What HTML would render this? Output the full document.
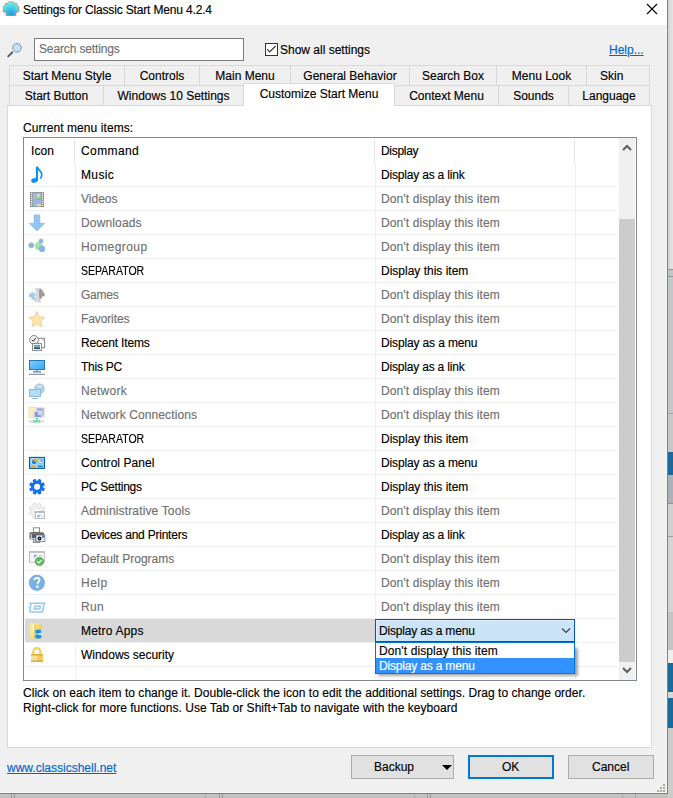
<!DOCTYPE html>
<html><head><meta charset="utf-8">
<style>
*{box-sizing:border-box}
html,body{margin:0;padding:0}
body{width:673px;height:798px;overflow:hidden;position:relative;background:#cfcfcf;font-family:"Liberation Sans",sans-serif;font-size:12px;color:#000;-webkit-text-stroke:0.15px currentColor}
.a{position:absolute}
.t{position:absolute;white-space:pre;line-height:17px;height:17px}
.g{color:#707070}
#win{position:absolute;left:0;top:0;width:668px;height:794px;background:#f0f0f0;border-right:1px solid #7474d9;border-bottom:1px solid #7474d9}
.bd{background:#d9d9d9}
.tabt{position:absolute;white-space:pre;line-height:17px;text-align:center}
.gl{position:absolute;background:#f0f0f0}
.btn{position:absolute;background:#e1e1e1;border:1px solid #adadad}
</style></head><body>
<!-- desktop strip -->
<div class="a" style="left:668px;top:0;width:5px;height:269px;background:linear-gradient(90deg,#d6d6d6,#e4e4e4)"></div>
<div class="a" style="left:668px;top:269px;width:5px;height:1px;background:#8a98a0"></div>
<div class="a" style="left:668px;top:270px;width:5px;height:6px;background:#c2c6ca"></div>
<div class="a" style="left:668px;top:276px;width:5px;height:1px;background:#8a98a0"></div>
<div class="a" style="left:668px;top:277px;width:5px;height:136px;background:#c4c6c8"></div>
<div class="a" style="left:668px;top:413px;width:5px;height:1px;background:#a0a4a8"></div>
<div class="a" style="left:668px;top:414px;width:5px;height:38px;background:#c8c8c8"></div>
<div class="a" style="left:668px;top:452px;width:5px;height:23px;background:#1c6a9a"></div>
<div class="a" style="left:668px;top:475px;width:5px;height:28px;background:#aeb2b8"></div>
<div class="a" style="left:668px;top:503px;width:5px;height:1px;background:#909498"></div>
<div class="a" style="left:668px;top:504px;width:5px;height:32px;background:#d0d0d0"></div>
<div class="a" style="left:668px;top:536px;width:5px;height:1px;background:#a0a0a0"></div>
<div class="a" style="left:668px;top:537px;width:5px;height:75px;background:#d4d4d4"></div>
<div class="a" style="left:668px;top:612px;width:5px;height:38px;background:#c4c4c4"></div>
<div class="a" style="left:668px;top:650px;width:5px;height:13px;background:#eeeeee"></div>
<div class="a" style="left:668px;top:663px;width:5px;height:29px;background:#1c6a9a"></div>
<div class="a" style="left:668px;top:692px;width:5px;height:6px;background:#d8d8d8"></div>
<div class="a" style="left:668px;top:698px;width:5px;height:30px;background:#1c6a9a"></div>
<div class="a" style="left:668px;top:728px;width:5px;height:70px;background:#cccccc"></div>
<div class="a" style="left:0;top:794px;width:668px;height:4px;background:linear-gradient(#c8c8c8,#bcbcbc)"></div>
<div class="a" style="left:11px;top:794px;width:1px;height:4px;background:#9a9a9a"></div>
<div class="a" style="left:14px;top:794px;width:1px;height:4px;background:#9a9a9a"></div>
<div class="a" style="left:205px;top:794px;width:1px;height:4px;background:#a8a8a8"></div>
<div class="a" style="left:219px;top:794px;width:1px;height:4px;background:#9a9a9a"></div>
<div class="a" style="left:222px;top:794px;width:1px;height:4px;background:#9a9a9a"></div>
<div class="a" style="left:414px;top:794px;width:1px;height:4px;background:#a8a8a8"></div>
<div class="a" style="left:427px;top:794px;width:1px;height:4px;background:#9a9a9a"></div>
<div class="a" style="left:430px;top:794px;width:1px;height:4px;background:#9a9a9a"></div>
<div class="a" style="left:622px;top:794px;width:1px;height:4px;background:#a8a8a8"></div>
<div class="a" style="left:635px;top:794px;width:1px;height:4px;background:#a8a8a8"></div>

<div id="win">
  <!-- title bar -->
  <div class="a" style="left:0;top:0;width:667px;height:25px;background:#fff"></div>
  <svg class="a" style="left:0;top:0" width="24" height="20" viewBox="0 0 24 20">
    <defs><radialGradient id="shg" gradientUnits="userSpaceOnUse" cx="11" cy="14.5" r="12"><stop offset="0" stop-color="#2a96d6"/><stop offset="0.55" stop-color="#44c8ea"/><stop offset="1" stop-color="#62f6fc"/></radialGradient>
    <g id="shl"><path d="M6.4 15.4V13L4 11Q3.6 5 11 3.6Q18.4 5 18 11L15.6 13V15.4Z"/><circle cx="9.4" cy="3.4" r="1.4"/><circle cx="12.6" cy="3.4" r="1.4"/><circle cx="6.4" cy="4.9" r="1.4"/><circle cx="15.6" cy="4.9" r="1.4"/><circle cx="4.7" cy="7.6" r="1.4"/><circle cx="17.3" cy="7.6" r="1.4"/><circle cx="4.3" cy="10.6" r="1.3"/><circle cx="17.7" cy="10.6" r="1.3"/></g></defs>
    <use href="#shl" fill="#e88848" stroke="#e88848" stroke-width="1.3"/>
    <use href="#shl" fill="url(#shg)"/>
  </svg>
  <div class="t" style="left:23px;top:2px;letter-spacing:-0.16px">Settings for Classic Start Menu 4.2.4</div>
  <svg class="a" style="left:646px;top:3px" width="12" height="12" viewBox="0 0 12 12"><path d="M1 1L11 11M11 1L1 11" stroke="#000" stroke-width="1.1"/></svg>

  <!-- search row -->
  <svg class="a" style="left:4px;top:38px" width="24" height="24" viewBox="0 0 24 24">
    <path d="M8.4 14.3L4.2 18.4" stroke="#4c5c68" stroke-width="1.9" stroke-linecap="round"/>
    <circle cx="13" cy="9.8" r="4.3" fill="#c2e0f6" stroke="#7e8c98" stroke-width="0.9"/>
  </svg>
  <div class="a" style="left:34px;top:38px;width:210px;height:23px;background:#fff;border:1px solid #7a7a7a"></div>
  <div class="t g" style="left:39px;top:41px;letter-spacing:-0.14px">Search settings</div>
  <div class="a" style="left:265px;top:43px;width:13px;height:13px;background:#fff;border:1px solid #333"></div>
  <svg class="a" style="left:265px;top:43px" width="13" height="13" viewBox="0 0 13 13"><path d="M2.2 6.2L4.7 8.9L10.6 3" stroke="#333" stroke-width="1.1" fill="none"/></svg>
  <div class="t" style="left:280px;top:42px">Show all settings</div>
  <div class="t" style="left:609px;top:42px;color:#0066cc;text-decoration:underline">Help...</div>

  <!-- tabs row 1 -->
  <div class="a" style="left:9px;top:65px;width:641px;height:21px;border:1px solid #d9d9d9"></div>
  <div class="a bd" style="left:124px;top:66px;width:1px;height:19px"></div>
  <div class="a bd" style="left:199px;top:66px;width:1px;height:19px"></div>
  <div class="a bd" style="left:290px;top:66px;width:1px;height:19px"></div>
  <div class="a bd" style="left:409px;top:66px;width:1px;height:19px"></div>
  <div class="a bd" style="left:496px;top:66px;width:1px;height:19px"></div>
  <div class="a bd" style="left:586px;top:66px;width:1px;height:19px"></div>
  <div class="tabt" style="left:9px;top:68px;width:116px">Start Menu Style</div>
  <div class="tabt" style="left:124px;top:68px;width:76px">Controls</div>
  <div class="tabt" style="left:199px;top:68px;width:92px">Main Menu</div>
  <div class="tabt" style="left:290px;top:68px;width:120px">General Behavior</div>
  <div class="tabt" style="left:409px;top:68px;width:88px">Search Box</div>
  <div class="tabt" style="left:496px;top:68px;width:91px">Menu Look</div>
  <div class="t" style="left:600px;top:68px">Skin</div>
  <!-- tabs row 2 -->
  <div class="a bd" style="left:9px;top:86px;width:1px;height:19px"></div>
  <div class="a bd" style="left:649px;top:86px;width:1px;height:19px"></div>
  <div class="a bd" style="left:103px;top:86px;width:1px;height:19px"></div>
  <div class="a bd" style="left:498px;top:86px;width:1px;height:19px"></div>
  <div class="a bd" style="left:568px;top:86px;width:1px;height:19px"></div>
  <div class="tabt" style="left:9px;top:88px;width:95px">Start Button</div>
  <div class="tabt" style="left:103px;top:88px;width:141px">Windows 10 Settings</div>
  <div class="tabt" style="left:394px;top:88px;width:105px">Context Menu</div>
  <div class="tabt" style="left:498px;top:88px;width:71px">Sounds</div>
  <div class="tabt" style="left:568px;top:88px;width:82px">Language</div>

  <!-- panel -->
  <div class="a" style="left:7px;top:105px;width:645px;height:643px;background:#fff;border:1px solid #d9d9d9"></div>
  <!-- selected tab -->
  <div class="a" style="left:243px;top:83px;width:152px;height:23px;background:#fff;border:1px solid #d9d9d9;border-bottom:none"></div>
  <div class="tabt" style="left:243px;top:86px;width:152px">Customize Start Menu</div>

  <div class="t" style="left:23px;top:120px;letter-spacing:0.08px">Current menu items:</div>

  <!-- list view -->
  <div class="a" style="left:23px;top:137px;width:614px;height:544px;border:1px solid #828790;background:#fff"></div>
  <!-- header dividers -->
  <div class="a" style="left:74px;top:139px;width:1px;height:24px;background:#e5e5e5"></div>
  <div class="a" style="left:374px;top:139px;width:1px;height:24px;background:#e5e5e5"></div>
  <div class="a" style="left:574px;top:139px;width:1px;height:24px;background:#e5e5e5"></div>
  <div class="t" style="left:31px;top:143px;letter-spacing:0.1px">Icon</div>
  <div class="t" style="left:81px;top:143px;letter-spacing:0.4px">Command</div>
  <div class="t" style="left:381px;top:143px;letter-spacing:-0.3px">Display</div>
  <!-- vertical gridlines -->
  <div class="gl" style="left:75px;top:163px;width:1px;height:516px;background:#eaf2fb"></div>
  <div class="gl" style="left:375px;top:163px;width:1px;height:516px;background:#eaf2fb"></div>
  <div class="gl" style="left:575px;top:163px;width:1px;height:516px;background:#eaf2fb"></div>
  <div class="gl" style="left:25px;top:186px;width:593px;height:1px"></div>
  <svg class="a" style="left:24px;top:163px" width="50" height="23" viewBox="0 0 50 23"><rect x="11.9" y="3.8" width="2.1" height="14.5" fill="#0a90f0"/>
<ellipse cx="10.4" cy="17.4" rx="3.3" ry="2.3" transform="rotate(-18 10.4 17.4)" fill="#0a90f0"/>
<path d="M13.4 4.2C14.4 7.2 17.9 8.2 17.8 11.5C17.7 13.4 17.2 14.4 16.6 15" stroke="#0a90f0" stroke-width="1.7" fill="none" stroke-linecap="round"/></svg>
  <div class="t" style="left:81px;top:167px;letter-spacing:0.375px">Music</div>
  <div class="t" style="left:381px;top:167px;letter-spacing:-0.19px">Display as a link</div>
  <div class="gl" style="left:25px;top:210px;width:593px;height:1px"></div>
  <svg class="a" style="left:24px;top:187px" width="50" height="23" viewBox="0 0 50 23"><rect x="6" y="5" width="14" height="15" fill="#8e8e8e"/><rect x="6.8" y="5.7" width="1.4" height="1.1" fill="#fff"/><rect x="17.8" y="5.7" width="1.4" height="1.1" fill="#fff"/><rect x="6.8" y="7.7" width="1.4" height="1.1" fill="#fff"/><rect x="17.8" y="7.7" width="1.4" height="1.1" fill="#fff"/><rect x="6.8" y="9.7" width="1.4" height="1.1" fill="#fff"/><rect x="17.8" y="9.7" width="1.4" height="1.1" fill="#fff"/><rect x="6.8" y="11.7" width="1.4" height="1.1" fill="#fff"/><rect x="17.8" y="11.7" width="1.4" height="1.1" fill="#fff"/><rect x="6.8" y="13.7" width="1.4" height="1.1" fill="#fff"/><rect x="17.8" y="13.7" width="1.4" height="1.1" fill="#fff"/><rect x="6.8" y="15.7" width="1.4" height="1.1" fill="#fff"/><rect x="17.8" y="15.7" width="1.4" height="1.1" fill="#fff"/><rect x="6.8" y="17.7" width="1.4" height="1.1" fill="#fff"/><rect x="17.8" y="17.7" width="1.4" height="1.1" fill="#fff"/>
<rect x="8.8" y="5.8" width="8.4" height="6.6" fill="#93b8ee"/>
<rect x="8.8" y="12.9" width="8.4" height="6.4" fill="#93b8ee"/>
<circle cx="14.5" cy="8.6" r="1.8" fill="#e6e070"/>
<rect x="8.8" y="10.8" width="3.5" height="1.6" fill="#f0b0a0"/>
<rect x="12.5" y="11" width="4.7" height="1.4" fill="#80d090"/>
<rect x="13" y="17.2" width="4" height="2" fill="#f0e080"/>
<circle cx="14.6" cy="14.6" r="1" fill="#d8a0c0"/></svg>
  <div class="t g" style="left:81px;top:191px;letter-spacing:0.000px">Videos</div>
  <div class="t g" style="left:381px;top:191px;letter-spacing:0.11px">Don&#39;t display this item</div>
  <div class="gl" style="left:25px;top:234px;width:593px;height:1px"></div>
  <svg class="a" style="left:24px;top:211px" width="50" height="23" viewBox="0 0 50 23"><path d="M10 3.9H15.9V12.3H20.9L12.95 19.9L5 12.3H10Z" fill="#95c5ef" stroke="#86b8e6" stroke-width="0.6"/></svg>
  <div class="t g" style="left:81px;top:215px;letter-spacing:0.150px">Downloads</div>
  <div class="t g" style="left:381px;top:215px;letter-spacing:0.11px">Don&#39;t display this item</div>
  <div class="gl" style="left:25px;top:258px;width:593px;height:1px"></div>
  <svg class="a" style="left:24px;top:235px" width="50" height="23" viewBox="0 0 50 23"><circle cx="14.85" cy="10.9" r="3.9" fill="#a2e2a4"/>
<circle cx="7.35" cy="10.35" r="2.5" fill="#88b6e2" stroke="#74a4d6" stroke-width="0.5"/>
<circle cx="17" cy="5.9" r="2" fill="#88b6e2" stroke="#74a4d6" stroke-width="0.5"/>
<circle cx="18.05" cy="13.9" r="2.85" fill="#88b6e2" stroke="#74a4d6" stroke-width="0.5"/></svg>
  <div class="t g" style="left:81px;top:239px;letter-spacing:0.425px">Homegroup</div>
  <div class="t g" style="left:381px;top:239px;letter-spacing:0.11px">Don&#39;t display this item</div>
  <div class="gl" style="left:25px;top:282px;width:593px;height:1px"></div>
  <div class="t" style="left:81px;top:263px;transform:scaleX(0.878);transform-origin:0 0">SEPARATOR</div>
  <div class="t" style="left:381px;top:263px;letter-spacing:0.0px">Display this item</div>
  <div class="gl" style="left:25px;top:306px;width:593px;height:1px"></div>
  <svg class="a" style="left:24px;top:283px" width="50" height="23" viewBox="0 0 50 23"><defs><linearGradient id="pwg" x1="0" y1="0" x2="1" y2="0"><stop offset="0" stop-color="#e6e9ec"/><stop offset="1" stop-color="#c4c9cd"/></linearGradient></defs>
<path d="M14.6 6.2L16.2 5.2L18.6 7.6L20.9 11.8L20.4 13.6L18.2 13.2L17.4 15.7L15.2 15.7Z" fill="#9b9b9b"/>
<path d="M11.2 5H14.8L15.4 7L14.6 9.2L14.8 13.6L16.2 16.6L17.3 19.3H9.1L10.2 16.6L11.6 13.6L11.8 9.2L10.8 7Z" fill="url(#pwg)"/>
<path d="M5 10.6H7.2C7 9.6 7.6 8.9 8.4 8.9C9.2 8.9 9.8 9.6 9.6 10.6H12V12.4C11 12.2 10.5 12.9 10.5 13.5C10.5 14.2 11 14.8 12 14.6V16.8H7.5V14.3H5Z" fill="#a9c9eb"/></svg>
  <div class="t g" style="left:81px;top:287px;letter-spacing:-0.250px">Games</div>
  <div class="t g" style="left:381px;top:287px;letter-spacing:0.11px">Don&#39;t display this item</div>
  <div class="gl" style="left:25px;top:330px;width:593px;height:1px"></div>
  <svg class="a" style="left:24px;top:307px" width="50" height="23" viewBox="0 0 50 23"><polygon points="12.95,4.40 15.24,9.84 21.13,10.34 16.66,14.21 18.00,19.96 12.95,16.90 7.90,19.96 9.24,14.21 4.77,10.34 10.66,9.84" fill="#fbe7ab" stroke="#f0c58e" stroke-width="0.8" stroke-linejoin="round"/></svg>
  <div class="t g" style="left:81px;top:311px;letter-spacing:-0.113px">Favorites</div>
  <div class="t g" style="left:381px;top:311px;letter-spacing:0.11px">Don&#39;t display this item</div>
  <div class="gl" style="left:25px;top:354px;width:593px;height:1px"></div>
  <svg class="a" style="left:24px;top:331px" width="50" height="23" viewBox="0 0 50 23"><rect x="13.6" y="7.3" width="7" height="9.4" fill="#fff" stroke="#8a8a8a" stroke-width="1"/>
<path d="M17.5 7.3L20.6 10.3" stroke="#8a8a8a" stroke-width="0.8"/>
<circle cx="10" cy="8.9" r="4.4" fill="#eef2f6" stroke="#8a8a8a" stroke-width="1"/>
<path d="M7.8 8.8L9.2 10.2L12 6.8" stroke="#333" stroke-width="1" fill="none"/>
<rect x="8.5" y="12.6" width="9" height="6.8" fill="#fff" stroke="#8c8c8c" stroke-width="1.1"/>
<rect x="10" y="14" width="6" height="1.5" fill="#5a9af0"/>
<rect x="10" y="15.5" width="6" height="1.5" fill="#5a8a50"/>
<rect x="10" y="17" width="6" height="1" fill="#1a4a8a"/></svg>
  <div class="t" style="left:81px;top:335px;letter-spacing:-0.182px">Recent Items</div>
  <div class="t" style="left:381px;top:335px;letter-spacing:-0.14px">Display as a menu</div>
  <div class="gl" style="left:25px;top:378px;width:593px;height:1px"></div>
  <svg class="a" style="left:24px;top:355px" width="50" height="23" viewBox="0 0 50 23"><defs><linearGradient id="pcg" x1="0" y1="0" x2="1" y2="1"><stop offset="0" stop-color="#86cdf8"/><stop offset="1" stop-color="#30a8f8"/></linearGradient></defs>
<rect x="5.5" y="5.5" width="15" height="9" fill="url(#pcg)" stroke="#2a76b6" stroke-width="1"/>
<rect x="12" y="14.8" width="2" height="1.2" fill="#9ab"/>
<rect x="9" y="16" width="8" height="1.5" fill="#6f8eaa"/>
<rect x="5" y="18.7" width="15.9" height="1.3" fill="#8a9db2"/></svg>
  <div class="t" style="left:81px;top:359px;letter-spacing:-0.233px">This PC</div>
  <div class="t" style="left:381px;top:359px;letter-spacing:-0.19px">Display as a link</div>
  <div class="gl" style="left:25px;top:402px;width:593px;height:1px"></div>
  <svg class="a" style="left:24px;top:379px" width="50" height="23" viewBox="0 0 50 23"><circle cx="15.4" cy="9.6" r="5.4" fill="#b0cfe2"/>
<path d="M12 6.5C13.5 5.5 15 7 16.5 6.5C17.5 6 18.5 7.5 17.5 8.5C16 9.5 14 9 13 8Z" fill="#d8e8f0"/>
<rect x="5.5" y="10.5" width="11" height="7" fill="#b2ddf8" stroke="#93bcd8" stroke-width="1"/>
<rect x="8" y="19" width="6" height="1" fill="#a2b4c4"/></svg>
  <div class="t g" style="left:81px;top:383px;letter-spacing:0.300px">Network</div>
  <div class="t g" style="left:381px;top:383px;letter-spacing:0.11px">Don&#39;t display this item</div>
  <div class="gl" style="left:25px;top:426px;width:593px;height:1px"></div>
  <svg class="a" style="left:24px;top:403px" width="50" height="23" viewBox="0 0 50 23"><rect x="5" y="4.1" width="7" height="10.7" fill="#f8f0c4" stroke="#e8d8a0" stroke-width="0.7"/>
<rect x="12" y="4.3" width="8.7" height="10.3" fill="#dcdcdc"/>
<rect x="13" y="5.3" width="6.5" height="7" fill="#a0acec"/>
<rect x="9.7" y="7.9" width="8.4" height="7.1" fill="#eaeaea" stroke="#d8d8d8" stroke-width="0.5"/>
<rect x="10.6" y="8.8" width="6.6" height="5.2" fill="#8c98e6"/>
<rect x="14" y="9" width="3" height="3" fill="#d0d8f8"/>
<rect x="5" y="17.4" width="15" height="2.2" fill="#dadada"/>
<rect x="12" y="15" width="2" height="2.5" fill="#78e0aa"/>
<rect x="9" y="17.1" width="6.9" height="2.5" fill="#72e2aa"/></svg>
  <div class="t g" style="left:81px;top:407px;letter-spacing:0.106px">Network Connections</div>
  <div class="t g" style="left:381px;top:407px;letter-spacing:0.11px">Don&#39;t display this item</div>
  <div class="gl" style="left:25px;top:450px;width:593px;height:1px"></div>
  <div class="t" style="left:81px;top:431px;transform:scaleX(0.878);transform-origin:0 0">SEPARATOR</div>
  <div class="t" style="left:381px;top:431px;letter-spacing:0.0px">Display this item</div>
  <div class="gl" style="left:25px;top:474px;width:593px;height:1px"></div>
  <svg class="a" style="left:24px;top:451px" width="50" height="23" viewBox="0 0 50 23"><rect x="5.5" y="6.4" width="15" height="11" fill="#92d2f8" stroke="#0b5a9c" stroke-width="1.1"/>
<rect x="13.5" y="8" width="5" height="5" fill="#7cc2f0"/>
<circle cx="10.2" cy="10.9" r="2.9" fill="#2282da" stroke="#e8f6ff" stroke-width="0.8"/>
<path d="M10.2 10.9V7.6A3.3 3.3 0 0 1 13.4 10.1Z" fill="#f8a800"/>
<rect x="14.4" y="9" width="2.2" height="0.9" fill="#fff"/><rect x="16.6" y="8.9" width="1.2" height="1.1" fill="#f08000"/>
<rect x="15.2" y="11" width="2.2" height="0.9" fill="#fff"/>
<rect x="7" y="14.7" width="5" height="1.2" fill="#f0a010"/>
<rect x="12" y="14.7" width="1.6" height="1.2" fill="#fff"/>
<rect x="13.6" y="14.7" width="5" height="1.2" fill="#1a6ad0"/></svg>
  <div class="t" style="left:81px;top:455px;letter-spacing:0.058px">Control Panel</div>
  <div class="t" style="left:381px;top:455px;letter-spacing:-0.14px">Display as a menu</div>
  <div class="gl" style="left:25px;top:498px;width:593px;height:1px"></div>
  <svg class="a" style="left:24px;top:475px" width="50" height="23" viewBox="0 0 50 23"><polygon points="13.07,5.80 13.66,5.83 14.65,3.86 17.57,5.07 16.88,7.16 17.31,7.56 17.71,7.99 19.80,7.30 21.01,10.22 19.04,11.21 19.07,11.80 19.04,12.39 21.01,13.38 19.80,16.30 17.71,15.61 17.31,16.04 16.88,16.44 17.57,18.53 14.65,19.74 13.66,17.77 13.07,17.80 12.48,17.77 11.49,19.74 8.57,18.53 9.26,16.44 8.83,16.04 8.43,15.61 6.34,16.30 5.13,13.38 7.10,12.39 7.07,11.80 7.10,11.21 5.13,10.22 6.34,7.30 8.43,7.99 8.83,7.56 9.26,7.16 8.57,5.07 11.49,3.86 12.48,5.83" fill="#1b6fe9"/>
<circle cx="13.07" cy="11.8" r="3.0" fill="#fff"/></svg>
  <div class="t" style="left:81px;top:479px;letter-spacing:-0.230px">PC Settings</div>
  <div class="t" style="left:381px;top:479px;letter-spacing:0.0px">Display this item</div>
  <div class="gl" style="left:25px;top:522px;width:593px;height:1px"></div>
  <svg class="a" style="left:24px;top:499px" width="50" height="23" viewBox="0 0 50 23"><polygon points="12.90,5.90 13.65,5.95 14.59,4.08 17.16,5.15 16.51,7.13 17.07,7.63 17.57,8.19 19.55,7.54 20.62,10.11 18.75,11.05 18.80,11.80 18.75,12.55 20.62,13.49 19.55,16.06 17.57,15.41 17.07,15.97 16.51,16.47 17.16,18.45 14.59,19.52 13.65,17.65 12.90,17.70 12.15,17.65 11.21,19.52 8.64,18.45 9.29,16.47 8.73,15.97 8.23,15.41 6.25,16.06 5.18,13.49 7.05,12.55 7.00,11.80 7.05,11.05 5.18,10.11 6.25,7.54 8.23,8.19 8.73,7.63 9.29,7.13 8.64,5.15 11.21,4.08 12.15,5.95" fill="#eff1f3" stroke="#cdcdcd" stroke-width="0.6"/>
<circle cx="12.9" cy="11.8" r="2.8" fill="#fff" stroke="#d8d8d8" stroke-width="0.5"/>
<rect x="11.4" y="12.6" width="9" height="6.8" fill="#fff" stroke="#b4b4b4" stroke-width="1"/>
<rect x="11.4" y="12.6" width="9" height="1.3" fill="#b8b8b8"/>
<path d="M13 16.5L14.3 17.8L16.5 15.5" stroke="#6ab0f0" stroke-width="1.1" fill="none"/>
<rect x="17.2" y="17" width="1.8" height="0.6" fill="#aaa"/></svg>
  <div class="t g" style="left:81px;top:503px;letter-spacing:0.147px">Administrative Tools</div>
  <div class="t g" style="left:381px;top:503px;letter-spacing:0.11px">Don&#39;t display this item</div>
  <div class="gl" style="left:25px;top:546px;width:593px;height:1px"></div>
  <svg class="a" style="left:24px;top:523px" width="50" height="23" viewBox="0 0 50 23"><rect x="9.5" y="4.8" width="6" height="4.6" fill="#fff" stroke="#8a8a8a" stroke-width="1"/>
<path d="M5.5 10.5Q5.5 9.2 7 9.2H18.5Q19.9 9.2 19.9 10.5V16.5H5.5Z" fill="#5a5a5a"/>
<rect x="6" y="10" width="13.5" height="1.4" fill="#7a7a7a"/>
<rect x="6.5" y="11" width="1.5" height="4" fill="#bbb"/>
<rect x="6" y="15.2" width="3" height="1.2" fill="#eee"/>
<rect x="9.3" y="15" width="6.4" height="4.6" fill="#fff" stroke="#8a8a8a" stroke-width="0.9"/>
<rect x="10.5" y="15.8" width="1.2" height="3" fill="#3a8ae8"/>
<rect x="12" y="12" width="8.9" height="6.75" fill="#e8eaec" stroke="#4a5a70" stroke-width="0.6"/>
<circle cx="15.5" cy="15.5" r="1.9" fill="#111"/>
<circle cx="15.5" cy="15.5" r="0.8" fill="#5ab0f0"/>
<rect x="18" y="12.5" width="2.5" height="2" fill="#3a7ad0"/></svg>
  <div class="t" style="left:81px;top:527px;letter-spacing:-0.226px">Devices and Printers</div>
  <div class="t" style="left:381px;top:527px;letter-spacing:-0.19px">Display as a link</div>
  <div class="gl" style="left:25px;top:570px;width:593px;height:1px"></div>
  <svg class="a" style="left:24px;top:547px" width="50" height="23" viewBox="0 0 50 23"><rect x="5.5" y="4.6" width="14.8" height="10.6" fill="#fff" stroke="#b8b8b8" stroke-width="1"/>
<rect x="5.5" y="4.6" width="14.8" height="1.6" fill="#c4c4c4"/>
<rect x="6.5" y="6.2" width="3" height="8.5" fill="#f4f4f4"/>
<path d="M10 7.8H13.5L10 11.5Z" fill="#6fb0f0"/>
<rect x="14.8" y="8" width="3.8" height="0.9" fill="#bbb"/>
<circle cx="15.4" cy="14.4" r="4.4" fill="#5fb862" stroke="#4fa852" stroke-width="0.5"/>
<path d="M13.2 14.6L14.8 15.9L17.6 13.2" stroke="#fff" stroke-width="1.3" fill="none"/></svg>
  <div class="t g" style="left:81px;top:551px;letter-spacing:-0.013px">Default Programs</div>
  <div class="t g" style="left:381px;top:551px;letter-spacing:0.11px">Don&#39;t display this item</div>
  <div class="gl" style="left:25px;top:594px;width:593px;height:1px"></div>
  <svg class="a" style="left:24px;top:571px" width="50" height="23" viewBox="0 0 50 23"><circle cx="12.9" cy="11.8" r="7.7" fill="#7bb1e3" stroke="#6a9fd2" stroke-width="0.6"/>
<path d="M10.5 9.2C10.5 7.6 11.6 6.9 13 6.9C14.5 6.9 15.5 7.8 15.5 9C15.5 10.6 13.6 10.8 13.6 12.7V13.2" stroke="#fff" stroke-width="1.7" fill="none"/>
<rect x="12.2" y="14.6" width="2.4" height="2.2" fill="#fff"/></svg>
  <div class="t g" style="left:81px;top:575px;letter-spacing:0.500px">Help</div>
  <div class="t g" style="left:381px;top:575px;letter-spacing:0.11px">Don&#39;t display this item</div>
  <div class="gl" style="left:25px;top:618px;width:593px;height:1px"></div>
  <svg class="a" style="left:24px;top:595px" width="50" height="23" viewBox="0 0 50 23"><path d="M7 8.3H20.3L18.5 17H6.2" stroke="#92caf2" stroke-width="1.5" fill="none"/>
<path d="M7 8.3L5.8 17" stroke="#92caf2" stroke-width="1.5"/>
<rect x="4.6" y="7.6" width="2.4" height="1.3" fill="#a8d4f4"/>
<rect x="4.4" y="12" width="2" height="1.3" fill="#a8d4f4"/>
<path d="M10.2 10.4H17.2L16.4 14.8H9.4Z" fill="#9ccaf0"/>
<path d="M11.4 11.9H15.6L15.3 13.3H11.1Z" fill="#e8f4fc"/></svg>
  <div class="t g" style="left:81px;top:599px;letter-spacing:0.300px">Run</div>
  <div class="t g" style="left:381px;top:599px;letter-spacing:0.11px">Don&#39;t display this item</div>
  <div class="a" style="left:25px;top:619px;width:350px;height:23px;background:#d9d9d9"></div>
  <div class="gl" style="left:25px;top:642px;width:593px;height:1px"></div>
  <svg class="a" style="left:24px;top:619px" width="50" height="23" viewBox="0 0 50 23"><defs><linearGradient id="fg" x1="0" y1="0" x2="1" y2="1"><stop offset="0" stop-color="#faf0a0"/><stop offset="1" stop-color="#e4bc50"/></linearGradient></defs>
<rect x="6" y="4" width="12.1" height="15.5" rx="0.8" fill="url(#fg)"/>
<path d="M6.3 4.3L10 5.5V19.3L6.3 18.3Z" fill="#f6e8a0"/>
<path d="M8.8 5.2L10.2 5.7V12L8.8 11.5Z" fill="#fff" opacity="0.85"/>
<path d="M10 5.5L11 5.8V19L10 19.3Z" fill="#d8b048" opacity="0.5"/>
<path d="M12 13.4H18.2L20.9 15L18.2 16.6H12Z" fill="#c4e6fc"/>
<ellipse cx="14.2" cy="12.6" rx="2.9" ry="2.2" fill="#1a92e4"/>
<ellipse cx="14.2" cy="17.4" rx="2.9" ry="2.2" fill="#1a92e4"/>
<path d="M13.5 15L16.5 14V16Z" fill="#e0f4ff"/></svg>
  <div class="t" style="left:81px;top:623px;letter-spacing:0.200px">Metro Apps</div>
  <div class="gl" style="left:25px;top:666px;width:593px;height:1px"></div>
  <svg class="a" style="left:24px;top:643px" width="50" height="23" viewBox="0 0 50 23"><path d="M9.4 11.2V8.7A3.5 3.5 0 0 1 16.4 8.7V11.2" stroke="#f0d05c" stroke-width="2.3" fill="none"/>
<rect x="7" y="11.1" width="12" height="7.8" fill="#f9c95a"/>
<rect x="7" y="11.1" width="6" height="7.8" fill="#f2e0a2"/>
<rect x="7" y="11.1" width="12" height="1.4" fill="#d9aa36"/>
<rect x="7" y="17.5" width="12" height="1.4" fill="#d9aa36"/></svg>
  <div class="t" style="left:81px;top:647px;letter-spacing:-0.020px">Windows security</div>
  <div class="t" style="left:381px;top:647px;letter-spacing:-0.14px">Display as a menu</div>
  <div class="a" style="left:375px;top:619px;width:200px;height:23px;background:#cce4f7;border:1px solid #0a54a4;box-shadow:inset 1px 1px 0 #def0ff"></div>
  <div class="t" style="left:379px;top:623px;letter-spacing:-0.18px">Display as a menu</div>
  <svg class="a" style="left:560px;top:626px" width="12" height="9" viewBox="0 0 12 9"><path d="M2 2.5L6 6.5L10 2.5" stroke="#404040" stroke-width="1.2" fill="none"/></svg>
  <div class="a" style="left:378px;top:648px;width:200px;height:28px;background:rgba(0,0,0,0.35);filter:blur(1.6px)"></div>
  <div class="a" style="left:375px;top:642px;width:200px;height:32px;background:#fff;border:1px solid #0078d7"></div>
  <div class="a" style="left:376px;top:658px;width:198px;height:15px;background:#3392ff"></div>
  <div class="t" style="left:379px;top:643px;letter-spacing:0.11px">Don&#39;t display this item</div>
  <div class="t" style="left:379px;top:658px;color:#fff;letter-spacing:-0.18px">Display as a menu</div>


  <!-- scrollbar -->
  <div class="a" style="left:619px;top:138px;width:16px;height:542px;background:#f0f0f0"></div>
  <div class="a" style="left:619px;top:219px;width:16px;height:443px;background:#cdcdcd"></div>
  <svg class="a" style="left:619px;top:138px" width="16" height="17" viewBox="0 0 16 17"><path d="M4 12L8 8L12 12" stroke="#606060" stroke-width="2" fill="none"/></svg>
  <svg class="a" style="left:619px;top:662px" width="16" height="17" viewBox="0 0 16 17"><path d="M4 6L8 10L12 6" stroke="#606060" stroke-width="2" fill="none"/></svg>

  <div class="t" style="left:23px;top:685px;letter-spacing:0.03px">Click on each item to change it. Double-click the icon to edit the additional settings. Drag to change order.</div>
  <div class="t" style="left:23px;top:700px;letter-spacing:0.025px">Right-click for more functions. Use Tab or Shift+Tab to navigate with the keyboard</div>

  <div class="t" style="left:7px;top:760px;color:#0066cc;text-decoration:underline">www.classicshell.net</div>

  <div class="a" style="left:666px;top:24px;width:1px;height:769px;background:#f8f8f2"></div>
  <div class="a" style="left:0;top:792px;width:667px;height:1px;background:#f8f8f2"></div>
  <div class="a" style="left:663px;top:784px;width:2px;height:2px;background:#a8a8a8"></div>
  <div class="a" style="left:660px;top:787px;width:2px;height:2px;background:#a8a8a8"></div>
  <div class="a" style="left:663px;top:787px;width:2px;height:2px;background:#a8a8a8"></div>
  <div class="a" style="left:657px;top:790px;width:2px;height:2px;background:#a8a8a8"></div>
  <div class="a" style="left:660px;top:790px;width:2px;height:2px;background:#a8a8a8"></div>
  <div class="a" style="left:663px;top:790px;width:2px;height:2px;background:#a8a8a8"></div>
  <!-- buttons -->
  <div class="btn" style="left:351px;top:755px;width:103px;height:24px"></div>
  <div class="t" style="left:374px;top:759px">Backup</div>
  <svg class="a" style="left:441px;top:764px" width="12" height="7" viewBox="0 0 12 7"><path d="M1 1H11L6 6Z" fill="#000"/></svg>
  <div class="btn" style="left:468px;top:755px;width:86px;height:24px;border:2px solid #0078d7"></div>
  <div class="t" style="left:502px;top:759px">OK</div>
  <div class="btn" style="left:568px;top:755px;width:86px;height:24px"></div>
  <div class="t" style="left:592px;top:759px">Cancel</div>
</div>
</body></html>
